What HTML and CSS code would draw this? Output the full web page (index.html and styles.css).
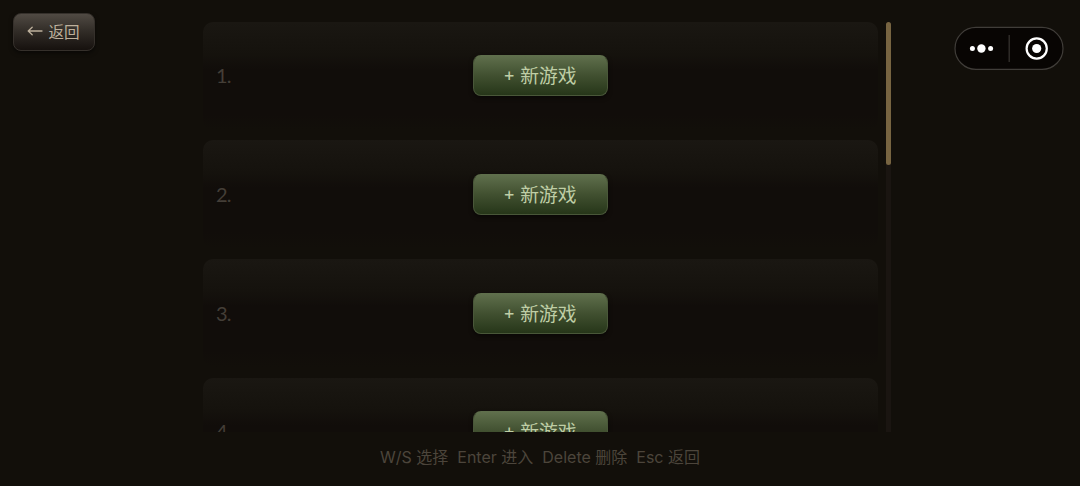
FILE: index.html
```html
<!DOCTYPE html>
<html lang="zh-CN">
<head>
    <meta charset="UTF-8">
    <meta name="viewport" content="width=device-width, initial-scale=1.0">
    <title>新游戏</title>
    <link rel="stylesheet" href="styles.css">
</head>
<body>
    <div class="screen">
        <aside class="side-left">
            <button class="btn-back">
                <svg width="16" height="12" viewBox="0 0 16 12" fill="none" stroke="currentColor" stroke-width="1.3" stroke-linecap="round" stroke-linejoin="round">
                    <path d="M15 6H1.2M5.2 2.2L1.2 6l4 3.8"/>
                </svg>
                <span>返回</span>
            </button>
        </aside>
        <main>
            <div class="slot-view">
                <div class="slot-list">
                    <div class="slot"><span class="slot-num">1.</span><button class="btn-new"><span class="plus">+</span><span>新游戏</span></button></div>
                    <div class="slot"><span class="slot-num">2.</span><button class="btn-new"><span class="plus">+</span><span>新游戏</span></button></div>
                    <div class="slot"><span class="slot-num">3.</span><button class="btn-new"><span class="plus">+</span><span>新游戏</span></button></div>
                    <div class="slot"><span class="slot-num">4.</span><button class="btn-new"><span class="plus">+</span><span>新游戏</span></button></div>
                </div>
                <div class="scrollbar"><div class="thumb"></div></div>
            </div>
            <footer class="hints">
                <span>W/S 选择</span>
                <span>Enter 进入</span>
                <span>Delete 删除</span>
                <span>Esc 返回</span>
            </footer>
        </main>
        <aside class="side-right">
            <div class="capsule">
                <svg width="110" height="44" viewBox="0 0 110 44">
                    <rect x="1" y="1.4" width="108" height="42" rx="21" fill="#080503" stroke="#403d39" stroke-width="1.2"/>
                    <circle cx="18.4" cy="22.5" r="2.5" fill="#fff"/>
                    <circle cx="27.4" cy="22.5" r="4.2" fill="#fff"/>
                    <circle cx="36.6" cy="22.5" r="2.5" fill="#fff"/>
                    <path d="M55.2 9v27" stroke="#35322e" stroke-width="1.3"/>
                    <circle cx="82.7" cy="22.5" r="10.1" fill="none" stroke="#fff" stroke-width="2.2"/>
                    <circle cx="82.7" cy="22.5" r="4.6" fill="#fff"/>
                </svg>
            </div>
        </aside>
    </div>
</body>
</html>
```
FILE: styles.css
```css
* {
    margin: 0;
    padding: 0;
    box-sizing: border-box;
    font-family: "Noto Sans CJK SC", sans-serif;
}

body {
    background-color: #120f0a;
    overflow: hidden;
}

.screen {
    display: flex;
    height: 486px;
}

.side-left {
    width: 202.5px;
    padding: 13.4px;
}

.side-right {
    flex: 1;
    display: flex;
    justify-content: flex-end;
    padding: 26px 16px 0 0;
}

main {
    width: 688.5px;
    padding-top: 21.6px;
    display: flex;
    flex-direction: column;
}

button {
    display: flex;
    align-items: center;
    justify-content: center;
    border-radius: 8px;
    white-space: nowrap;
}

.btn-back {
    width: 81.4px;
    height: 38px;
    gap: 5px;
    padding: 0 1px 2px 0;
    font-size: 15.6px;
    color: #bdb09c;
    border: 1px solid #35302b;
    background: linear-gradient(#504a43, #302b26 50%, #16110e);
    box-shadow: 0 2px 4px rgba(0,0,0,0.5);
}

.slot-view {
    display: flex;
    justify-content: space-between;
    height: 410.4px;
    overflow: hidden;
}

.slot-list {
    width: 675px;
    display: flex;
    flex-direction: column;
    gap: 10.8px;
}

.slot {
    display: flex;
    align-items: center;
    flex-shrink: 0;
    height: 108px;
    padding-left: 13.5px;
    border-radius: 10px;
    background: linear-gradient(#1a1712, #15120d 30%, #110d0a 44%, #110d0a 85%, #120f0a);
}

.slot-num {
    width: 256.5px;
    padding-bottom: 1px;
    font-family: Lato, sans-serif;
    font-size: 20px;
    letter-spacing: -0.8px;
    color: #443e37;
}

.btn-new {
    width: 135px;
    height: 41px;
    padding-bottom: 2px;
    font-size: 18.8px;
    color: #bfcea6;
    border: 1px solid #495739;
    border-top-color: #5f6f4c;
    background: linear-gradient(#5f6f4c, #415030 50%, #263619);
    box-shadow: 0 2px 4px rgba(0,0,0,0.5);
}

.plus {
    margin-right: 5px;
    font-family: Inter, sans-serif;
    font-size: 18px;
}

.scrollbar {
    width: 5.5px;
    background-color: #1a1511;
    border-radius: 3px 3px 0 0;
}

.thumb {
    height: 143px;
    border-radius: 3px;
    background-color: #776441;
}

.hints {
    display: flex;
    justify-content: center;
    gap: 9px;
    width: 675px;
    padding-top: 13px;
    font-family: Inter, "Noto Sans CJK SC", sans-serif;
    font-size: 16px;
    line-height: 24px;
    color: #4c453b;
}

.hints span {
    font-family: inherit;
}
```
